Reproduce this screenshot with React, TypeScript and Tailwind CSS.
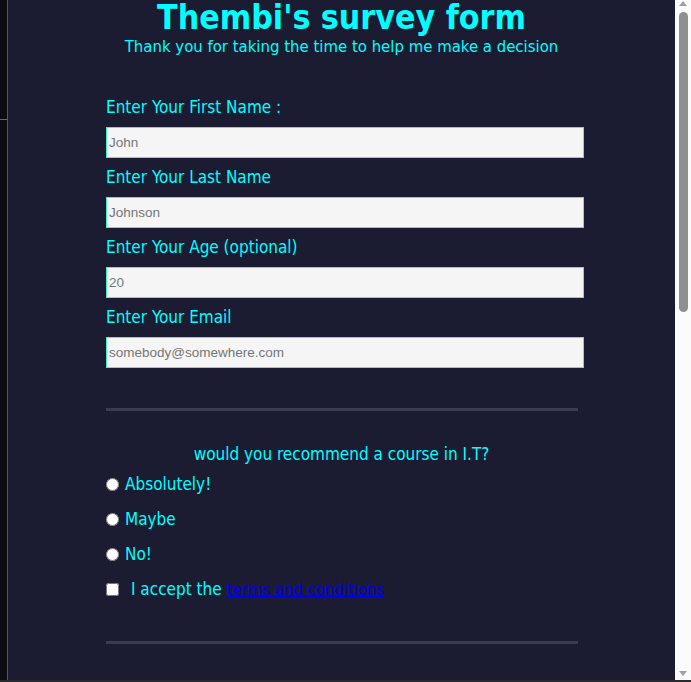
import React from 'react';

const fields = [
  { label: 'Enter Your First Name :', type: 'text', placeholder: 'John' },
  { label: 'Enter Your Last Name', type: 'text', placeholder: 'Johnson' },
  { label: 'Enter Your Age (optional)', type: 'number', placeholder: '20' },
  { label: 'Enter Your Email', type: 'email', placeholder: 'somebody@somewhere.com' },
];

const options = ['Absolutely!', 'Maybe', 'No!'];

export default function App() {
  return (
    <div className="flex h-[682px] w-[691px] flex-col overflow-hidden bg-[#2a2a2a] font-['DejaVu_Sans_Condensed','DejaVu_Sans',sans-serif]">
      <div className="flex h-[680px]">
        {/* neighbouring pane edge */}
        <div className="flex w-[8px] flex-col border-r border-[#55575c] bg-[#0b0d12]">
          <div className="mt-[119px] h-px w-full bg-[#3b6fb8]" />
        </div>

        <main className="flex-1 bg-[#1b1b32]">
          <header className="pt-[2px] text-center text-[#00ffff]">
            <h1 className="text-[33.6px] font-bold leading-[32px]">Thembi's survey form</h1>
            <p className="mt-[3px] text-[16.6px] leading-[20px]">
              Thank you for taking the time to help me make a decision
            </p>
          </header>

          <form className="mt-[31px]">
            <div className="ml-[98px] w-[478px]">
              {fields.map((f) => (
                <div key={f.label}>
                  <label className="block h-[39px] pt-[9px] text-[17px] leading-[20px] text-[#00ffff]">
                    {f.label}
                  </label>
                  <input
                    type={f.type}
                    placeholder={f.placeholder}
                    className="block h-[31px] w-full border border-[#4af0c0] bg-[#f5f5f5] px-[2px] font-['Liberation_Sans',Arial,sans-serif] text-[13.5px] text-black outline-none placeholder:text-[#757575]"
                  />
                </div>
              ))}
              <div className="mt-[40px] h-[3px] w-[472px] bg-[#3b3b4f]" />
            </div>

            <p className="h-[56px] pt-[33px] text-center text-[17px] leading-[20px] text-[#00ffff]">
              would you recommend a course in I.T?
            </p>

            <div className="ml-[98px]">
              {options.map((o) => (
                <label key={o} className="flex h-[35px] items-center gap-[6px] text-[17px] text-[#00ffff]">
                  <input type="radio" name="recommend" className="m-0 h-[13px] w-[13px]" />
                  {o}
                </label>
              ))}
              <label className="flex h-[35px] items-center gap-[12px] text-[17px] text-[#00ffff]">
                <input type="checkbox" className="m-0 h-[13px] w-[13px]" />
                <span>
                  I accept the{' '}
                  <a href="#" className="text-[16.6px] text-[#0000ee] underline">
                    terms and conditions
                  </a>
                </span>
              </label>
              <div className="mt-[34px] h-[3px] w-[472px] bg-[#3b3b4f]" />
            </div>
          </form>
        </main>

        {/* scrollbar */}
        <div className="flex w-[16px] flex-col items-center bg-[#fbfbfb]">
          <div className="mt-[1px] h-0 w-0 border-x-[4px] border-b-[5px] border-x-transparent border-b-[#a0a0a0]" />
          <div className="mt-[6px] h-[300px] w-[9px] rounded-full bg-[#8f8f8f]" />
          <div className="mt-auto mb-[4px] h-0 w-0 border-x-[4px] border-t-[5px] border-x-transparent border-t-[#a0a0a0]" />
        </div>
      </div>
    </div>
  );
}
